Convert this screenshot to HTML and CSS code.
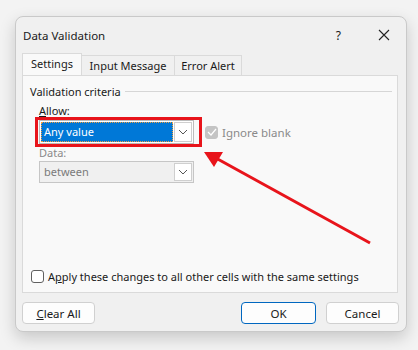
FILE: index.html
```html
<!DOCTYPE html>
<html lang="en">

<head>
    <meta charset="UTF-8">
    <title>Data Validation</title>
    <link rel="stylesheet" href="styles.css">
</head>

<body>
    <div class="dialog">
        <div class="titlebar">
            <span class="title">Data Validation</span>
            <span class="help">?</span>
            <svg class="close" width="12" height="12" viewBox="0 0 12 12">
                <path d="M1 1 L11 11 M11 1 L1 11" stroke="#222" stroke-width="1.1" fill="none" />
            </svg>
        </div>

        <div class="tabs">
            <div class="tab active">Settings</div>
            <div class="tab message">Input Message</div>
            <div class="tab alert">Error Alert</div>
        </div>

        <div class="panel">
            <div class="group">
                <span class="legend">Validation criteria</span>
                <span class="group-line"></span>
            </div>

            <div class="field">
                <div class="label"><u>A</u>llow:</div>
                <div class="row">
                    <div class="combo-wrap">
                        <div class="combo">
                            <div class="combo-value selected">Any value</div>
                            <div class="combo-btn">
                                <svg width="10" height="6" viewBox="0 0 10 6">
                                    <path d="M1 1 L5 5 L9 1" stroke="#555" stroke-width="1" fill="none" />
                                </svg>
                            </div>
                        </div>
                        <div class="highlight"></div>
                    </div>
                    <label class="check disabled">
                        <span class="box checked">
                            <svg width="10" height="8" viewBox="0 0 10 8">
                                <path d="M1 4 L4 7 L9 1" stroke="#fff" stroke-width="1.2" fill="none" />
                            </svg>
                        </span>
                        <span>Ignore blank</span>
                    </label>
                </div>
            </div>

            <div class="field data">
                <div class="label disabled-text">Data:</div>
                <div class="combo disabled">
                    <div class="combo-value">between</div>
                    <div class="combo-btn">
                        <svg width="10" height="6" viewBox="0 0 10 6">
                            <path d="M1 1 L5 5 L9 1" stroke="#555" stroke-width="1" fill="none" />
                        </svg>
                    </div>
                </div>
            </div>

            <label class="check apply">
                <span class="box"></span>
                <span>A<u>p</u>ply these changes to all other cells with the same settings</span>
            </label>
        </div>

        <div class="footer">
            <button class="btn"><u>C</u>lear All</button>
            <span class="spacer"></span>
            <button class="btn default">OK</button>
            <button class="btn">Cancel</button>
        </div>
    </div>

    <!-- annotation arrow -->
    <svg class="arrow" width="418" height="350" viewBox="0 0 418 350">
        <line x1="370" y1="243" x2="214" y2="157" stroke="#e8141b" stroke-width="3" />
        <polygon points="204,152 223,152 214,167" fill="#e8141b" />
    </svg>
</body>

</html>
```

FILE: styles.css
```css
body {
    margin: 0;
    background-color: #f3f3f3;
    font-family: "Noto Sans", sans-serif;
    font-size: 11px;
    color: #1a1a1a;
    width: 418px;
    height: 350px;
    overflow: hidden;
}

.dialog {
    box-sizing: border-box;
    margin: 16px 0 0 15px;
    width: 392px;
    height: 316px;
    background-color: #f0f0f0;
    border: 1px solid #c9c9c9;
    border-radius: 8px;
    box-shadow: 0 6px 16px rgba(0, 0, 0, 0.18);
    display: flex;
    flex-direction: column;
}

.titlebar {
    height: 36px;
    display: flex;
    align-items: center;
    padding: 0 16px 0 7px;
}

.title {
    font-size: 11.5px;
    flex: 1;
}

.help {
    font-size: 12px;
    margin-right: 37px;
}

.tabs {
    display: flex;
    align-items: flex-end;
    margin-left: 6px;
    height: 22px;
}

.tab {
    box-sizing: border-box;
    height: 20px;
    border: 1px solid #dadada;
    border-bottom: none;
    border-left: none;
    background-color: #f0f0f0;
    line-height: 19px;
    text-align: center;
}

.tab.message {
    width: 93px;
}

.tab.alert {
    width: 67px;
}

.tab.active {
    height: 23px;
    width: 60px;
    border-left: 1px solid #dadada;
    background-color: #f9f9f9;
    margin-bottom: -1px;
    line-height: 20px;
}

.panel {
    box-sizing: border-box;
    width: 376px;
    height: 218px;
    margin-left: 6px;
    background-color: #f9f9f9;
    border: 1px solid #dadada;
    padding: 6px 0 0 7px;
    display: flex;
    flex-direction: column;
}

.group {
    display: flex;
    align-items: center;
    height: 18px;
}

.group-line {
    flex: 1;
    height: 1px;
    background-color: #d6d6d6;
    margin: 0 5px 0 4px;
}

.field {
    margin-left: 9px;
}

.label {
    height: 17px;
    line-height: 17px;
    margin-top: 2px;
}

.row {
    display: flex;
    align-items: center;
    margin-top: 1px;
}

.combo-wrap {
    position: relative;
}

.combo {
    box-sizing: border-box;
    width: 155px;
    height: 24px;
    border: 1px solid #bcbcbc;
    background-color: #fff;
    display: flex;
    padding: 1px;
}

.combo-value {
    flex: 1;
    padding-left: 3px;
    line-height: 20px;
    color: #1a1a1a;
}

.combo-value.selected {
    background-color: #0078d7;
    color: #fff;
    outline: 1px dotted #f0a040;
    outline-offset: -1px;
    margin-right: 1px;
}

.combo-btn {
    box-sizing: border-box;
    width: 18px;
    border: 1px solid #cfcfcf;
    background-color: #fff;
    display: flex;
    align-items: center;
    justify-content: center;
}

.highlight {
    position: absolute;
    left: -4px;
    top: -3px;
    width: 167px;
    height: 30px;
    box-sizing: border-box;
    border: 3px solid #e8141b;
}

.check {
    display: flex;
    align-items: center;
    gap: 4px;
}

.check.disabled {
    margin-left: 11px;
    color: #8a8a8a;
    font-size: 11.5px;
}

.box {
    box-sizing: border-box;
    width: 13px;
    height: 13px;
    border: 1px solid #606060;
    border-radius: 3px;
    background-color: #fff;
    display: flex;
    align-items: center;
    justify-content: center;
}

.box.checked {
    border-color: #c4c4c4;
    background-color: #c4c4c4;
}

.data .label {
    margin-top: 0;
}

.disabled-text {
    color: #8a8a8a;
}

.combo.disabled {
    height: 22px;
    background-color: #f0f0f0;
    border-color: #c6c6c6;
    margin-top: 0;
}

.combo.disabled .combo-value {
    color: #7a7a7a;
    line-height: 18px;
}

.apply {
    margin-top: auto;
    margin-bottom: 8px;
    margin-left: 1px;
}

.footer {
    display: flex;
    align-items: center;
    gap: 10px;
    padding: 9px 7px 0 6px;
}

.spacer {
    flex: 1;
}

.btn {
    box-sizing: border-box;
    width: 73px;
    height: 22px;
    font-family: "Noto Sans", sans-serif;
    font-size: 11.5px;
    color: #1a1a1a;
    background-color: #fdfdfd;
    border: 1px solid #d0d0d0;
    border-radius: 4px;
    padding: 0;
}

.btn.default {
    width: 75px;
    border-color: #0067c0;
}

.arrow {
    position: absolute;
    left: 0;
    top: 0;
}
```
